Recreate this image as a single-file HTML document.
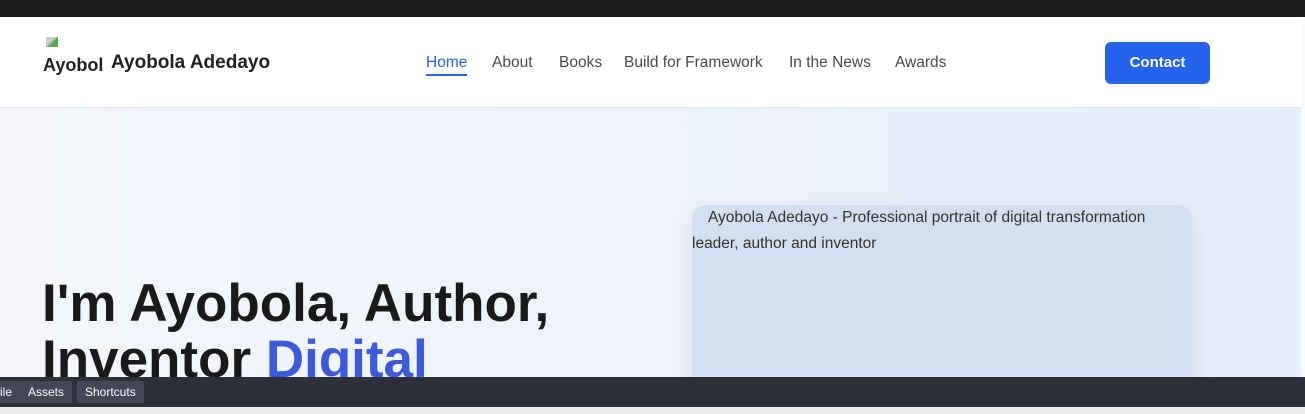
<!DOCTYPE html>
<html><head><meta charset="utf-8"><style>
*{margin:0;padding:0;box-sizing:border-box}
body{width:1305px;height:414px;overflow:hidden;font-family:"Liberation Sans",sans-serif;background:#eef2fa;position:relative}
.top{position:absolute;left:0;top:0;width:1305px;height:17px;background:#1b1b1b}
.hdr{position:absolute;left:0;top:17px;width:1305px;height:91px;background:#fff;border-bottom:1px solid #e3e6ea}
.hero{position:absolute;left:0;top:109px;width:1305px;height:268px;background:linear-gradient(90deg,#f4f6fb,#e6eefb)}
.sb{position:absolute;right:0;top:17px;width:4px;height:360px;background:#fafafa}
.nav a{position:absolute;top:54px;font-size:15.5px;color:#4a4a4a;text-decoration:none;white-space:nowrap}
.btn{position:absolute;left:1105px;top:42px;width:105px;height:42px;background:#2563eb;border-radius:6px;color:#fff;font-weight:bold;font-size:15px;text-align:center;line-height:42px}
h1{position:absolute;left:42px;top:276px;font-size:53px;line-height:56px;color:#1a1a1a;font-weight:bold;white-space:nowrap}
.img{position:absolute;left:692px;top:205px;width:500px;height:200px;background:#d4dfef;border-radius:14px;box-shadow:0 8px 24px rgba(0,0,0,.08);font-size:15.5px;color:#333;line-height:26px;padding-left:16px}
.bar{position:absolute;left:0;top:377px;width:1305px;height:30px;background:#2d303b}
.bar span{position:absolute;top:4px;height:22px;background:#434756;color:#fff;font-size:12px;line-height:22px;padding:0 8px;border-radius:2px}
.bot{position:absolute;left:0;top:407px;width:1305px;height:7px;background:#eee}
</style></head><body>
<div class="top"></div>
<div class="hdr"></div>
<div class="hero"></div>
<div class="sb"></div>
<div style="position:absolute;left:46px;top:37px;width:12px;height:10px;background:linear-gradient(135deg,#ccc 40%,#4caf50 60%)"></div>
<div style="position:absolute;left:43px;top:55px;font-size:18px;font-weight:bold;color:#222;width:60px;overflow:hidden;white-space:nowrap">Ayobola</div>
<div style="position:absolute;left:111px;top:52px;font-size:19px;font-weight:bold;color:#222">Ayobola Adedayo</div>
<div class="nav">
<a style="left:426px;color:#2563eb;border-bottom:2px solid #2563eb;padding-bottom:2px">Home</a>
<a style="left:492px">About</a>
<a style="left:559px">Books</a>
<a style="left:624px">Build for Framework</a>
<a style="left:789px">In the News</a>
<a style="left:895px">Awards</a>
</div>
<div class="btn">Contact</div>
<h1>I'm Ayobola, Author,<br>Inventor <span style="color:#3b5bdb">Digital</span></h1>
<div class="img">Ayobola Adedayo - Professional portrait of digital transformation<br><span style="margin-left:-16px">leader, author and inventor</span></div>
<div class="bar"><span style="left:-8px">ile</span><span style="left:20px">Assets</span><span style="left:77px">Shortcuts</span></div>
<div class="bot"></div>
</body></html>
